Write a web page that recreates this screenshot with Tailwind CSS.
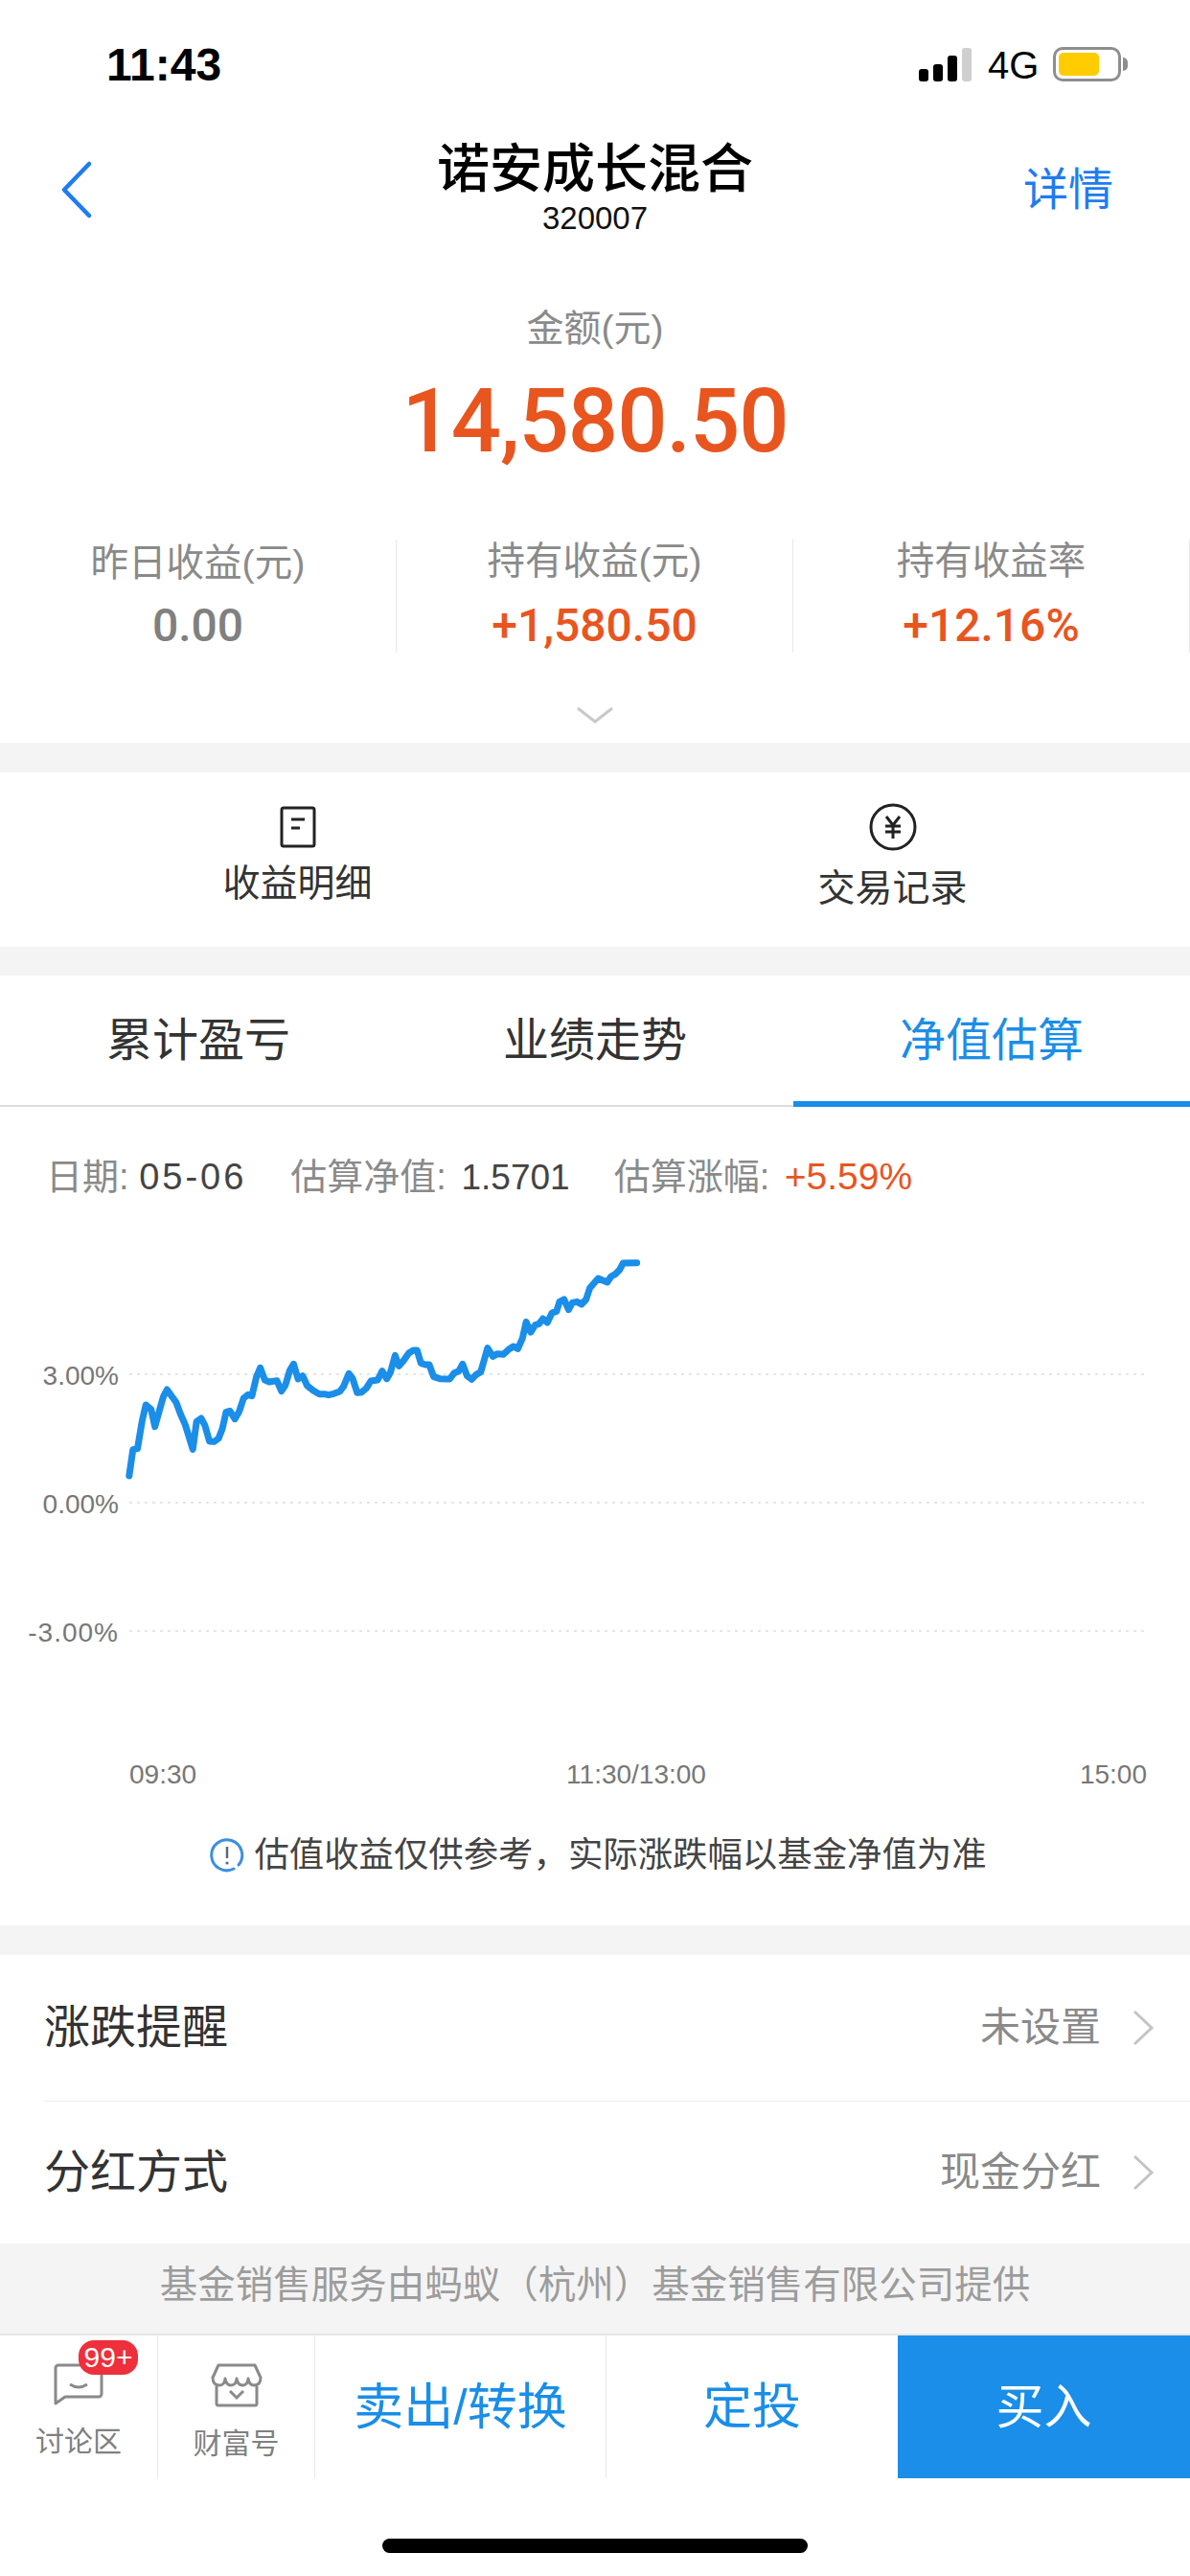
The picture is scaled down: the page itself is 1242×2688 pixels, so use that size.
<!DOCTYPE html>
<html lang="zh-CN">
<head>
    <meta charset="UTF-8">
    <meta name="viewport" content="width=device-width, initial-scale=1.0">
    <title>诺安成长混合</title>
    <script src="https://cdn.jsdelivr.net/npm/@tailwindcss/browser@4"></script>
</head>
<body class="bg-white font-['Liberation_Sans','Noto_Sans_CJK_SC',sans-serif]">
<div class="w-[1242px] h-[2688px] overflow-hidden flex flex-col">

    <!-- Status bar -->
    <div class="h-[136px] shrink-0 flex justify-between pl-[111px] pr-[65px] pt-[40px]">
        <span class="text-[48px] leading-[56px] font-bold text-black">11:43</span>
        <div class="flex items-end h-[45px]">
            <div class="flex items-end gap-[5px]">
                <span class="w-[10px] h-[13px] rounded-[3px] bg-black"></span>
                <span class="w-[10px] h-[18px] rounded-[3px] bg-black"></span>
                <span class="w-[10px] h-[27px] rounded-[3px] bg-black"></span>
                <span class="w-[10px] h-[35px] rounded-[3px] bg-[#cfcfcf]"></span>
            </div>
            <span class="ml-[17px] w-[68px] text-[40px] leading-[44px] -mb-[5px] text-black">4G</span>
            <div class="flex items-center">
                <div class="w-[71px] h-[36px] rounded-[10px] border-[3px] border-[#8e8e8e] p-[3px]">
                    <div class="w-[42px] h-full rounded-[5px] bg-[#ffcc00]"></div>
                </div>
                <span class="w-[5px] h-[14px] ml-[2px] rounded-r-full bg-[#8e8e8e]"></span>
            </div>
        </div>
    </div>

    <!-- Nav -->
    <div class="relative h-[128px] shrink-0 flex flex-col items-center">
        <svg class="absolute left-[62px] top-[32px]" width="36" height="60" viewBox="0 0 36 60" fill="none"><path d="M31 3 L5 30 L31 57" stroke="#1f7cf0" stroke-width="4.5" stroke-linecap="round" stroke-linejoin="round"/></svg>
        <div class="text-[55px] leading-[64px] mt-[8px] font-medium text-black">诺安成长混合</div>
        <div class="text-[33px] leading-[32px] mt-[4px] text-[#111]">320007</div>
        <span class="absolute right-[80px] top-[36px] text-[47px] leading-[52px] text-[#1f7cf0]">详情</span>
    </div>

    <!-- Amount -->
    <div class="shrink-0 flex flex-col items-center">
        <div class="text-[39px] leading-[44px] mt-[57px] text-[#8a8a8a]">金额(元)</div>
        <div class="text-[92px] leading-[100px] mt-[25px] font-['Roboto'] font-medium text-[#e8551f] tracking-[-1px]">14,580.50</div>
    </div>

    <!-- Stats -->
    <div class="grid grid-cols-3 shrink-0 mt-[73px] h-[111px]">
        <div class="flex flex-col items-center border-r border-[#e8e8e8]">
            <div class="text-[39.5px] leading-[44px] mt-[2px] text-[#8a8a8a]">昨日收益(元)</div>
            <div class="text-[48px] leading-[56px] mt-[16px] font-['Roboto'] font-medium text-[#808080]">0.00</div>
        </div>
        <div class="flex flex-col items-center border-r border-[#e8e8e8]">
            <div class="text-[39.5px] leading-[44px] text-[#8a8a8a]">持有收益(元)</div>
            <div class="text-[48px] leading-[56px] mt-[18px] font-['Roboto'] font-medium text-[#e8551f]">+1,580.50</div>
        </div>
        <div class="flex flex-col items-center border-r border-[#e8e8e8]">
            <div class="text-[39.5px] leading-[44px] text-[#8a8a8a]">持有收益率</div>
            <div class="text-[48px] leading-[56px] mt-[18px] font-['Roboto'] font-medium text-[#e8551f]">+12.16%</div>
        </div>
    </div>

    <!-- Expand chevron -->
    <div class="h-[101px] shrink-0 flex justify-center pt-[63px]">
        <svg width="40" height="18" viewBox="0 0 40 18" fill="none"><path d="M2 2 L20 16 L38 2" stroke="#c9c9c9" stroke-width="3"/></svg>
    </div>

    <div class="h-[31px] shrink-0 bg-[#f4f4f4]"></div>

    <!-- Shortcuts -->
    <div class="h-[182px] shrink-0 grid grid-cols-2">
        <div class="flex flex-col items-center pt-[35px]">
            <svg width="38" height="44" viewBox="0 0 38 44" fill="none"><rect x="2" y="2" width="34" height="40" rx="2" stroke="#222" stroke-width="3"/><path d="M12 14 H26 M12 23 H21" stroke="#222" stroke-width="3"/></svg>
            <div class="text-[39px] leading-[44px] mt-[15px] text-[#333]">收益明细</div>
        </div>
        <div class="flex flex-col items-center pt-[32px]">
            <svg width="50" height="50" viewBox="0 0 50 50" fill="none"><circle cx="25" cy="25" r="23" stroke="#222" stroke-width="3"/><path d="M18 14 L25 23 L32 14 M17 24 H33 M17 30 H33 M25 23 V37" stroke="#222" stroke-width="3"/></svg>
            <div class="text-[39px] leading-[44px] mt-[17px] text-[#333]">交易记录</div>
        </div>
    </div>

    <div class="h-[30px] shrink-0 bg-[#f4f4f4]"></div>

    <!-- Tabs -->
    <div class="h-[137px] shrink-0 grid grid-cols-3 border-b-[2px] border-[#dddddd]">
        <div class="flex justify-center pt-[40px] text-[48px] leading-[56px] text-[#333]">累计盈亏</div>
        <div class="flex justify-center pt-[40px] text-[48px] leading-[56px] text-[#333]">业绩走势</div>
        <div class="flex justify-center pt-[40px] text-[48px] leading-[56px] text-[#1a8ee8] border-b-[6px] border-[#1a8ee8] -mb-[2px]">净值估算</div>
    </div>

    <!-- Estimate info -->
    <div class="h-[125px] shrink-0 flex pl-[48px] pt-[50px] text-[38px] leading-[46px] text-[#8a8a8a]">
        <span>日期: <span class="text-[#444] tracking-[3px]">05-06</span></span>
        <span class="ml-[46px]">估算净值: <span class="ml-[5px] text-[37px] text-[#444]">1.5701</span></span>
        <span class="ml-[46px]">估算涨幅: <span class="ml-[5px] text-[39px] text-[#e8551f]">+5.59%</span></span>
    </div>

    <!-- Chart -->
    <svg class="shrink-0" width="1242" height="610" viewBox="0 1280 1242 610" fill="none">
        <g stroke="#e6e6e6" stroke-width="2" stroke-dasharray="3 5">
            <path d="M135 1434 H1195"/>
            <path d="M135 1568 H1195"/>
            <path d="M135 1702 H1195"/>
        </g>
        <g fill="#777777" font-size="28" text-anchor="end">
            <text x="124" y="1445">3.00%</text>
            <text x="124" y="1579">0.00%</text>
            <text x="124" y="1713" letter-spacing="1">-3.00%</text>
        </g>
        <g fill="#777777" font-size="28">
            <text x="135" y="1861">09:30</text>
            <text x="664" y="1861" text-anchor="middle">11:30/13:00</text>
            <text x="1197" y="1861" text-anchor="end">15:00</text>
        </g>
        <svg x="100" y="1280" width="620" height="300" viewBox="0 0 1568 900" preserveAspectRatio="none">
            <polyline vector-effect="non-scaling-stroke" stroke="#1a8ee8" stroke-width="7" stroke-linecap="round" stroke-linejoin="round" fill="none"
                points="88,780 98,698 110,695 122,610 132,558 146,572 156,626 168,575 178,533 188,510 200,530 212,550 224,588 236,620 246,658 256,697 266,610 278,600 288,622 300,672 312,673 324,663 334,632 344,580 354,577 367,602 378,580 390,537 402,526 412,530 424,470 434,442 446,480 458,486 478,482 490,515 500,497 512,450 522,430 534,477 546,467 558,498 574,513 590,524 604,524 614,527 628,523 644,516 654,500 668,460 678,476 690,520 702,518 714,506 726,483 744,480 756,452 768,476 778,455 790,403 800,436 812,420 826,396 838,387 848,387 858,427 870,432 880,432 892,470 908,476 934,477 946,458 958,452 968,430 980,467 992,478 1004,463 1016,455 1034,380 1048,406 1060,398 1076,400 1090,384 1102,375 1114,382 1126,350 1136,298 1148,330 1160,308 1170,304 1180,288 1192,300 1204,270 1216,265 1224,235 1236,228 1248,260 1258,238 1270,235 1282,243 1294,228 1304,192 1326,162 1350,174 1360,156 1372,148 1382,136 1392,114 1428,113"/>
        </svg>
    </svg>

    <!-- Note -->
    <div class="h-[119px] shrink-0 flex justify-center items-start pt-[25px] pl-[7px]">
        <svg class="mt-[2px]" width="36" height="38" viewBox="0 0 36 38" fill="none">
            <path d="M25 33 A16 16 0 1 1 30 29" stroke="#3d8fe0" stroke-width="3" stroke-linecap="round"/>
            <path d="M18 10 V22" stroke="#5a6b7a" stroke-width="2.5"/>
            <circle cx="18" cy="27" r="1.6" fill="#5a6b7a"/>
        </svg>
        <span class="ml-[10px] text-[36.4px] leading-[42px] text-[#444]">估值收益仅供参考，实际涨跌幅以基金净值为准</span>
    </div>

    <div class="h-[31px] shrink-0 bg-[#f4f4f4]"></div>

    <!-- Settings rows -->
    <div class="ml-[46px] h-[153px] shrink-0 flex items-center justify-between border-b border-[#eeeeee] pr-[37px]">
        <span class="text-[48px] leading-[56px] text-[#333]">涨跌提醒</span>
        <div class="flex items-center">
            <span class="text-[42px] leading-[50px] text-[#8a8a8a]">未设置</span>
            <svg class="ml-[32px]" width="24" height="38" viewBox="0 0 24 38" fill="none"><path d="M3 2 L21 19 L3 36" stroke="#c4c4c4" stroke-width="3"/></svg>
        </div>
    </div>
    <div class="ml-[46px] h-[148px] shrink-0 flex items-center justify-between pr-[37px]">
        <span class="text-[48px] leading-[56px] text-[#333]">分红方式</span>
        <div class="flex items-center">
            <span class="text-[42px] leading-[50px] text-[#8a8a8a]">现金分红</span>
            <svg class="ml-[32px]" width="24" height="38" viewBox="0 0 24 38" fill="none"><path d="M3 2 L21 19 L3 36" stroke="#c4c4c4" stroke-width="3"/></svg>
        </div>
    </div>

    <!-- Provider footer -->
    <div class="h-[96px] shrink-0 bg-[#f4f4f4] border-b-[2px] border-[#e6e6e6] flex justify-center pt-[20px] text-[39.5px] leading-[46px] text-[#9c9c9c]">基金销售服务由蚂蚁（杭州）基金销售有限公司提供</div>

    <!-- Bottom bar -->
    <div class="h-[149px] shrink-0 flex">
        <div class="relative w-[165px] flex flex-col items-center pt-[29px] border-r border-[#e8e8e8]">
            <svg width="52" height="44" viewBox="0 0 52 44" fill="none">
                <path d="M5 2 H47 a3 3 0 0 1 3 3 V32 a3 3 0 0 1 -3 3 H12 L2 42 V5 a3 3 0 0 1 3 -3 Z" stroke="#8a8a8a" stroke-width="3" stroke-linejoin="round"/>
                <path d="M17 22 Q26 28 35 22" stroke="#8a8a8a" stroke-width="3"/>
            </svg>
            <span class="absolute left-[82px] top-[5px] w-[62px] h-[36px] rounded-[16px] bg-[#ee2f3c] text-white text-[30px] leading-[36px] text-center">99+</span>
            <span class="text-[30px] leading-[36px] mt-[20px] text-[#808080]">讨论区</span>
        </div>
        <div class="w-[164px] flex flex-col items-center pt-[29px] border-r border-[#e8e8e8]">
            <svg width="56" height="46" viewBox="0 0 56 46" fill="none" stroke="#8a8a8a" stroke-width="3">
                <path d="M3 15 Q3 23 10 23 Q15.5 23 16 16 Q17 23 22 23 Q27.5 23 28 16 Q29 23 34 23 Q39.5 23 40 16 Q41 23 46 23 Q53 23 53 15 L47 2 H9 Z" stroke-linejoin="round"/>
                <path d="M7 24 V42 a2 2 0 0 0 2 2 H47 a2 2 0 0 0 2 -2 V24"/>
                <path d="M21 29 L28 36 L35 29"/>
            </svg>
            <span class="text-[30px] leading-[36px] mt-[20px] text-[#808080]">财富号</span>
        </div>
        <div class="w-[304px] flex items-center justify-center border-r border-[#e8e8e8] text-[#1a8ee8] text-[52px] leading-[60px]">卖出/转换</div>
        <div class="w-[304px] flex items-center justify-center text-[#1a8ee8] text-[51px] leading-[60px]">定投</div>
        <div class="flex-1 flex items-center justify-center bg-[#1a8ee8] text-white text-[50px] leading-[60px]">买入</div>
    </div>

    <!-- Home indicator -->
    <div class="flex-1 flex justify-center pt-[63px]">
        <div class="w-[444px] h-[15px] rounded-full bg-black"></div>
    </div>
</div>
</body>
</html>
